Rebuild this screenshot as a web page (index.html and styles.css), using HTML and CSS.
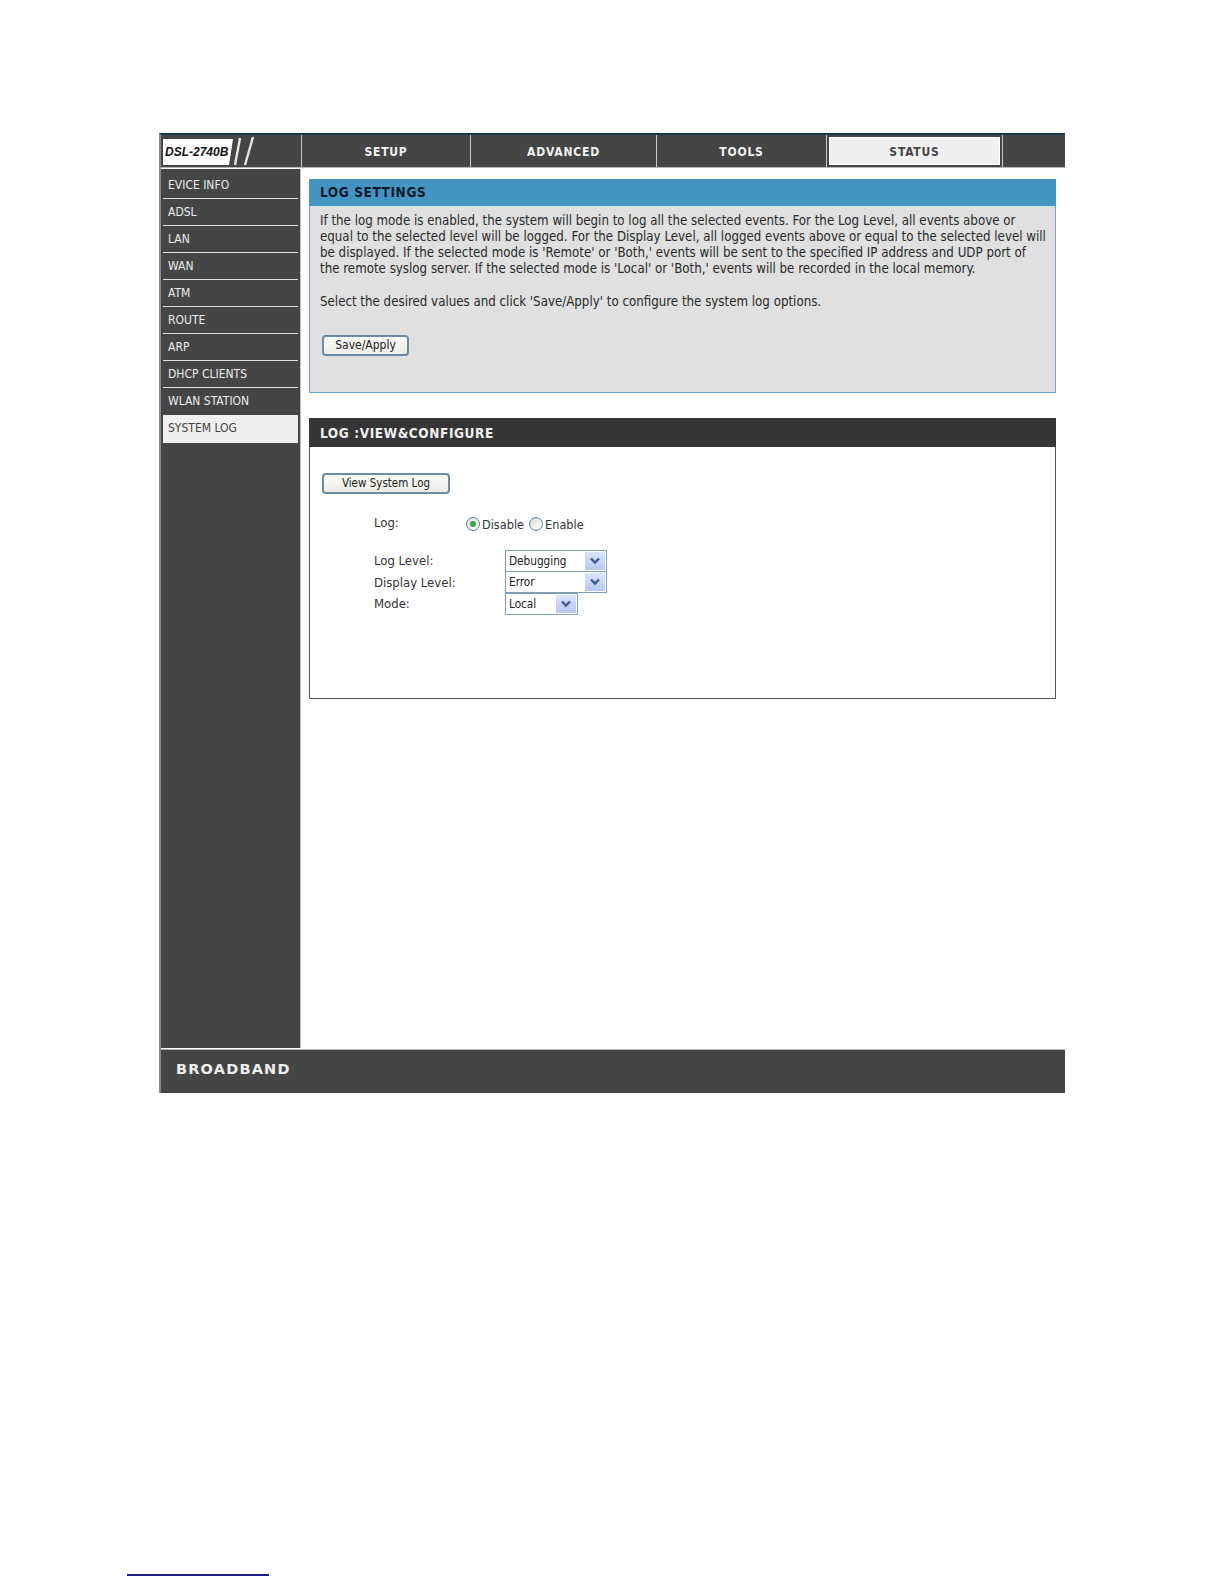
FILE: index.html
```html
<!DOCTYPE html>
<html lang="en">
<head>
<meta charset="utf-8">
<title>DSL-2740B System Log</title>
<link rel="stylesheet" href="styles.css">
</head>
<body>
<div class="frame">
  <header class="topbar">
    <div class="logo">
      <svg class="logo-art" width="139" height="32" viewBox="0 0 139 32">
        <polygon points="2,4 72,4 68,30 2,30" fill="#fff"/>
        <line x1="74" y1="30" x2="79" y2="3" stroke="#e4e4e4" stroke-width="2.4"/>
        <line x1="84" y1="30" x2="92" y2="2" stroke="#e4e4e4" stroke-width="2.4"/>
        <text x="4" y="21" class="logo-text">DSL-2740B</text>
      </svg>
    </div>
    <nav class="tabs">
      <a class="tab tab-setup">SETUP</a>
      <a class="tab tab-advanced">ADVANCED</a>
      <a class="tab tab-tools">TOOLS</a>
      <a class="tab tab-status">STATUS</a>
      <span class="tab tab-rest"></span>
    </nav>
  </header>
  <div class="middle">
    <aside class="sidebar">
      <a class="item">EVICE INFO</a>
      <a class="item">ADSL</a>
      <a class="item">LAN</a>
      <a class="item">WAN</a>
      <a class="item">ATM</a>
      <a class="item">ROUTE</a>
      <a class="item">ARP</a>
      <a class="item">DHCP CLIENTS</a>
      <a class="item item-plain">WLAN STATION</a>
      <a class="item item-active">SYSTEM LOG</a>
    </aside>
    <main class="content">
      <section class="panel panel-info">
        <h2 class="panel-title title-blue">LOG SETTINGS</h2>
        <div class="info-body">
          <p class="para">If the log mode is enabled, the system will begin to log all the selected events. For the Log Level, all events above or<br>equal to the selected level will be logged. For the Display Level, all logged events above or equal to the selected level will<br>be displayed. If the selected mode is 'Remote' or 'Both,' events will be sent to the specified IP address and UDP port of<br>the remote syslog server. If the selected mode is 'Local' or 'Both,' events will be recorded in the local memory.</p>
          <p class="para para-second">Select the desired values and click 'Save/Apply' to configure the system log options.</p>
          <button class="btn btn-save" type="button">Save/Apply</button>
        </div>
      </section>
      <section class="panel panel-config">
        <h2 class="panel-title title-dark">LOG :VIEW&amp;CONFIGURE</h2>
        <div class="config-body">
          <button class="btn btn-view" type="button">View System Log</button>
          <div class="log-row">
            <span class="label log-label">Log:</span>
            <span class="radio radio-on"></span><span class="radio-text">Disable</span>
            <span class="radio radio-second"></span><span class="radio-text radio-text-second">Enable</span>
          </div>
          <div class="field-row">
            <span class="label field-label">Log Level:</span>
            <div class="select select-wide"><span class="select-value">Debugging</span><span class="arrow"><svg width="20" height="18" viewBox="0 0 20 18"><path d="M6 6.5l4 4 4-4" fill="none" stroke="#3c5a8c" stroke-width="2.4"/></svg></span></div>
          </div>
          <div class="field-row">
            <span class="label field-label">Display Level:</span>
            <div class="select select-wide"><span class="select-value">Error</span><span class="arrow"><svg width="20" height="18" viewBox="0 0 20 18"><path d="M6 6.5l4 4 4-4" fill="none" stroke="#3c5a8c" stroke-width="2.4"/></svg></span></div>
          </div>
          <div class="field-row">
            <span class="label field-label">Mode:</span>
            <div class="select select-narrow"><span class="select-value">Local</span><span class="arrow"><svg width="20" height="18" viewBox="0 0 20 18"><path d="M6 6.5l4 4 4-4" fill="none" stroke="#3c5a8c" stroke-width="2.4"/></svg></span></div>
          </div>
        </div>
      </section>
    </main>
  </div>
  <footer class="footer"><span class="brand">BROADBAND</span></footer>
</div>
<div class="footnote-rule"></div>
</body>
</html>
```

FILE: styles.css
```css
* { box-sizing: border-box; }
html, body { margin: 0; padding: 0; background: #fff; }
body {
  width: 1224px;
  height: 1584px;
  overflow: hidden;
  padding-top: 133px;
  font-family: "DejaVu Sans", "Liberation Sans", sans-serif;
  font-stretch: condensed;
  color: #222;
}
.frame {
  margin-left: 159px;
  width: 906px;
  height: 960px;
  border-top: 2px solid #16384e;
  border-left: 2px solid #8a8a8a;
  display: flex;
  flex-direction: column;
}
.topbar {
  display: flex;
  height: 33px;
  border-bottom: 1px solid #b5b5b5;
  flex: none;
}
.logo {
  width: 140px;
  background: #444645;
  flex: none;
}
.logo-art { display: block; }
.logo-text {
  font-family: "Liberation Sans", Arial, sans-serif;
  font-weight: 700;
  font-style: italic;
  font-size: 12px;
  fill: #111;
}
.tabs { display: flex; flex: 1; }
.tab {
  display: flex;
  align-items: center;
  justify-content: center;
  background: #444645;
  border-left: 1px solid #c9c9c9;
  color: #f2f2f2;
  font-size: 12px;
  font-weight: 700;
  letter-spacing: 0.8px;
  padding-top: 2px;
}
.tab-setup { width: 169px; }
.tab-advanced { width: 186px; }
.tab-tools { width: 170px; }
.tab-status {
  width: 175px;
  background: #f0f0f0;
  color: #444;
  border: 2px solid #444645;
  box-shadow: inset 0 0 0 1px #fff, -1px 0 0 #c9c9c9;
  margin-left: 1px;
}
.tab-rest { flex: 1; }
.middle {
  display: flex;
  flex: none;
  height: 879px;
  margin-top: 1px;
}
.sidebar {
  width: 139px;
  flex: none;
  background: #444645;
  padding: 0 2px;
}
.item {
  display: block;
  height: 27px;
  line-height: 27px;
  padding-left: 5px;
  border-bottom: 1px solid #e0e0e0;
  color: #ececec;
  font-size: 12px;
}
.item:first-child { height: 30px; line-height: 33px; }
.item-plain { border-bottom: 0; line-height: 27px; }
.item-active {
  background: #efefef;
  color: #444;
  border-bottom: 0;
  height: 28px;
  line-height: 27px;
}
.content {
  flex: 1;
  padding: 10px 8px 0 8px;
  border-left: 1px solid #bdbdbd;
}
.panel { width: 747px; }
.panel-title {
  margin: 0;
  padding-left: 11px;
  font-size: 13.5px;
  font-weight: 700;
  letter-spacing: 0.6px;
}
.panel-info {
  height: 214px;
  background: #dfe0df;
  border: 1px solid #6ea4cc;
}
.title-blue {
  height: 27px;
  line-height: 27px;
  background: #4494c4;
  color: #0c1a2a;
  margin: -1px -1px 0;
}
.info-body { padding: 7px 0 0 10px; }
.para {
  margin: 0;
  font-size: 13.2px;
  line-height: 16.1px;
  color: #2a2a2a;
  white-space: nowrap;
}
.para-second { margin-top: 16.7px; }
.btn {
  display: block;
  height: 21px;
  padding: 0 0 1px;
  border: 2px solid #6c8ca6;
  border-radius: 4px;
  background: linear-gradient(#fbfbf8, #ecebe4);
  font-family: inherit;
  font-stretch: condensed;
  font-size: 12px;
  color: #222;
}
.btn-save { width: 87px; margin: 25px 0 0 2px; }
.panel-config {
  margin-top: 25px;
  height: 281px;
  border: 1px solid #555;
  background: #fff;
}
.title-dark {
  height: 29px;
  line-height: 30px;
  background: #353535;
  color: #efefef;
  margin: -1px -1px 0;
}
.config-body { padding: 26px 0 0 12px; }
.btn-view { width: 128px; font-size: 11.5px; }
.log-row {
  display: flex;
  align-items: center;
  height: 20px;
  margin: 20px 0 16px 52px;
  font-size: 12.6px;
}
.label { color: #333; font-size: 13px; }
.log-label { width: 92px; margin-top: -4px; }
.radio {
  position: relative;
  width: 14px;
  height: 14px;
  border: 1px solid #5b7d96;
  border-radius: 50%;
  background: linear-gradient(135deg, #dcdcd6, #fff);
  flex: none;
}
.radio-on::after {
  content: "";
  position: absolute;
  left: 3px;
  top: 3px;
  width: 6px;
  height: 6px;
  border-radius: 50%;
  background: #3fa74a;
}
.radio-second { margin-left: 5px; }
.radio-text { margin-left: 2px; color: #333; }
.radio-text-second { margin-left: 2px; }
.field-row {
  display: flex;
  align-items: center;
  height: 21.5px;
  margin-left: 52px;
}
.field-label { width: 131px; flex: none; }
.select {
  display: flex;
  align-items: center;
  justify-content: space-between;
  height: 22px;
  border: 1px solid #7f9db9;
  background: #fff;
  padding: 1px 1px 1px 3px;
  font-size: 11.7px;
  color: #222;
}
.select-wide { width: 102px; }
.select-narrow { width: 73px; }
.arrow {
  display: block;
  width: 20px;
  height: 18px;
  background: linear-gradient(#dbe5fb, #b6c8f2);
}
.arrow svg { display: block; }
.footer {
  flex: none;
  height: 44px;
  margin-top: 1px;
  border-top: 1px solid #b5b5b5;
  background: #444645;
  padding: 11px 0 0 15px;
}
.brand {
  display: block;
  font-size: 14.5px;
  line-height: 17px;
  font-weight: 700;
  font-stretch: normal;
  letter-spacing: 1.2px;
  color: #efefef;
}
.footnote-rule {
  width: 142px;
  height: 2px;
  margin: 481px 0 0 127px;
  background: #1c1c8c;
}
```
